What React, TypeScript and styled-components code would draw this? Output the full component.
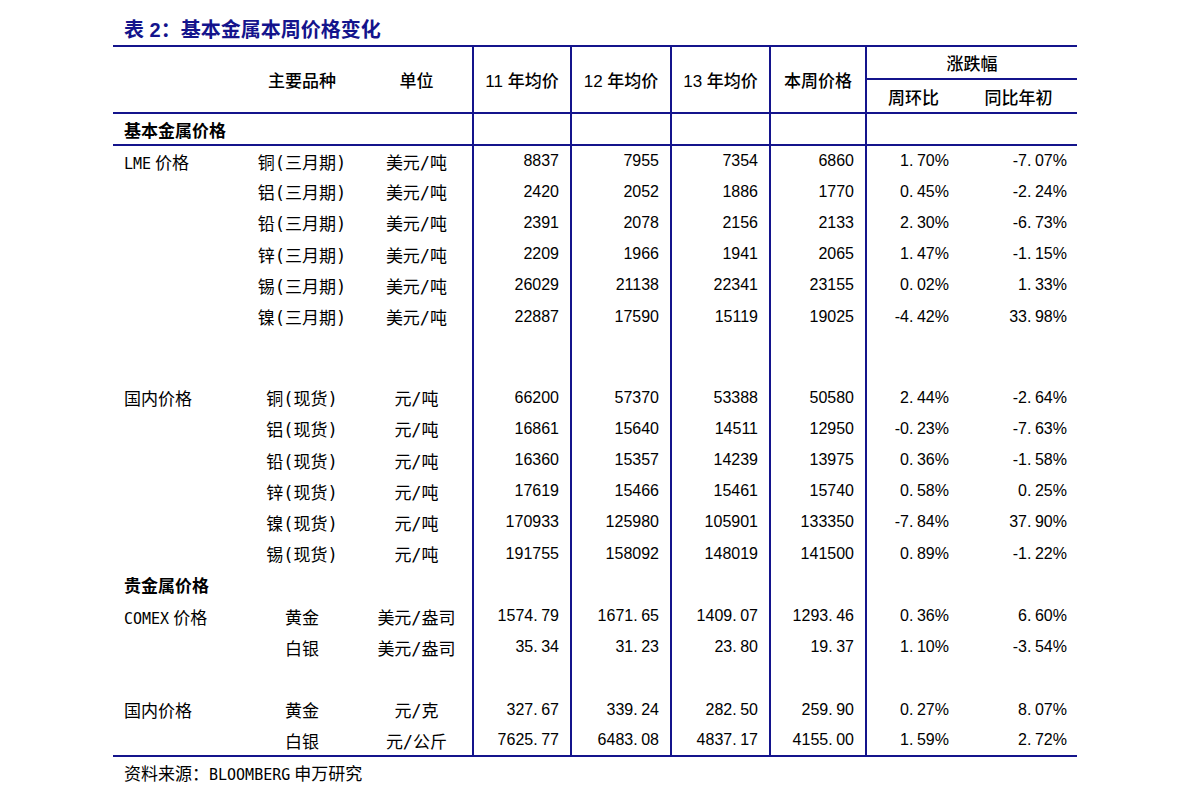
import React from "react"
import styled, {createGlobalStyle} from "styled-components"

const NAVY = "#14148c"

const GlobalStyle = createGlobalStyle`
    body {
        margin: 0;
        background: #fff;
    }
`

const Page = styled.div`
    padding: 16px 0 0 113px;
    width: 964px;
    color: #000;
`

const Title = styled.h2`
    margin: 0 0 0 11px;
    height: 29px;
    line-height: 29px;
    font-family: "Liberation Sans", "Noto Sans CJK SC", sans-serif;
    font-size: 20px;
    font-weight: 700;
    color: ${NAVY};
`

const Table = styled.table`
    width: 964px;
    border-collapse: collapse;
    table-layout: fixed;
    border-top: 2px solid ${NAVY};
    border-bottom: 2px solid ${NAVY};
`

const Head = styled.thead`
    border-bottom: 2px solid ${NAVY};
`

const HeadCell = styled.th<{ $divider?: boolean; $under?: boolean }>`
    padding: 0;
    font-family: "Liberation Sans", "Noto Sans CJK SC", sans-serif;
    font-size: 17px;
    font-weight: 500;
    text-align: center;
    vertical-align: middle;
    border-left: ${p => (p.$divider ? `2px solid ${NAVY}` : "none")};
    border-bottom: ${p => (p.$under ? `2px solid ${NAVY}` : "none")};
`

const HeadRow = styled.tr<{ $h: number }>`
    height: ${p => p.$h}px;
`

const BodyRow = styled.tr<{ $h?: number; $under?: boolean }>`
    height: ${p => p.$h ?? 31.2}px;
    border-bottom: ${p => (p.$under ? `2px solid ${NAVY}` : "none")};
`

const TextCell = styled.td<{ $align?: "left" | "center"; $bold?: boolean }>`
    padding: ${p => (p.$align === "left" ? "0 0 0 11px" : "0")};
    font-family: "DejaVu Sans Mono", "Noto Sans CJK SC", monospace;
    font-size: 17px;
    font-weight: ${p => (p.$bold ? 700 : 400)};
    text-align: ${p => p.$align ?? "center"};
    white-space: nowrap;
    vertical-align: middle;
`

const Latin = styled.span`
    font-size: 15px;
    margin-right: 4px;
`

const NumCell = styled.td<{ $divider?: boolean; $pad?: number }>`
    padding: 0 ${p => p.$pad ?? 11}px 0 0;
    font-family: "Liberation Sans", Arial, sans-serif;
    font-size: 16px;
    text-align: right;
    white-space: nowrap;
    vertical-align: middle;
    border-left: ${p => (p.$divider ? `2px solid ${NAVY}` : "none")};
`

const Dot = styled.span`
    display: inline-block;
    width: 0.5em;
    text-align: left;
`

const Source = styled.div`
    margin: 6px 0 0 11px;
    font-family: "DejaVu Sans Mono", "Noto Sans CJK SC", monospace;
    font-size: 17px;
    line-height: 22px;
`

interface Item {
    group?: string
    name: string
    unit: string
    values: string[]
    wk: string
    ytd: string
}

const lme: Item[] = [
    {group: "LME|价格", name: "铜(三月期)", unit: "美元/吨", values: ["8837", "7955", "7354", "6860"], wk: "1.70%", ytd: "-7.07%"},
    {name: "铝(三月期)", unit: "美元/吨", values: ["2420", "2052", "1886", "1770"], wk: "0.45%", ytd: "-2.24%"},
    {name: "铅(三月期)", unit: "美元/吨", values: ["2391", "2078", "2156", "2133"], wk: "2.30%", ytd: "-6.73%"},
    {name: "锌(三月期)", unit: "美元/吨", values: ["2209", "1966", "1941", "2065"], wk: "1.47%", ytd: "-1.15%"},
    {name: "锡(三月期)", unit: "美元/吨", values: ["26029", "21138", "22341", "23155"], wk: "0.02%", ytd: "1.33%"},
    {name: "镍(三月期)", unit: "美元/吨", values: ["22887", "17590", "15119", "19025"], wk: "-4.42%", ytd: "33.98%"},
]

const domestic: Item[] = [
    {group: "国内价格", name: "铜(现货)", unit: "元/吨", values: ["66200", "57370", "53388", "50580"], wk: "2.44%", ytd: "-2.64%"},
    {name: "铝(现货)", unit: "元/吨", values: ["16861", "15640", "14511", "12950"], wk: "-0.23%", ytd: "-7.63%"},
    {name: "铅(现货)", unit: "元/吨", values: ["16360", "15357", "14239", "13975"], wk: "0.36%", ytd: "-1.58%"},
    {name: "锌(现货)", unit: "元/吨", values: ["17619", "15466", "15461", "15740"], wk: "0.58%", ytd: "0.25%"},
    {name: "镍(现货)", unit: "元/吨", values: ["170933", "125980", "105901", "133350"], wk: "-7.84%", ytd: "37.90%"},
    {name: "锡(现货)", unit: "元/吨", values: ["191755", "158092", "148019", "141500"], wk: "0.89%", ytd: "-1.22%"},
]

const comex: Item[] = [
    {group: "COMEX|价格", name: "黄金", unit: "美元/盎司", values: ["1574.79", "1671.65", "1409.07", "1293.46"], wk: "0.36%", ytd: "6.60%"},
    {name: "白银", unit: "美元/盎司", values: ["35.34", "31.23", "23.80", "19.37"], wk: "1.10%", ytd: "-3.54%"},
]

const preciousDomestic: Item[] = [
    {group: "国内价格", name: "黄金", unit: "元/克", values: ["327.67", "339.24", "282.50", "259.90"], wk: "0.27%", ytd: "8.07%"},
    {name: "白银", unit: "元/公斤", values: ["7625.77", "6483.08", "4837.17", "4155.00"], wk: "1.59%", ytd: "2.72%"},
]

const Num: React.FC<{ v: string }> = ({v}) => {
    const i = v.indexOf(".")
    if (i < 0) return <>{v}</>
    return (
        <>
            {v.slice(0, i)}
            <Dot>.</Dot>
            {v.slice(i + 1)}
        </>
    )
}

// "LME|价格" -> latin part set narrower, like the half-width latin of the source font
const Group: React.FC<{ label?: string }> = ({label}) => {
    if (!label) return null
    const [latin, rest] = label.split("|")
    if (rest === undefined) return <>{label}</>
    return (
        <>
            <Latin>{latin}</Latin>
            {rest}
        </>
    )
}

const DataRow: React.FC<{ item: Item }> = ({item}) => (
    <BodyRow>
        <TextCell $align="left"><Group label={item.group} /></TextCell>
        <TextCell>{item.name}</TextCell>
        <TextCell>{item.unit}</TextCell>
        {item.values.map((v, i) => (
            <NumCell key={i} $divider>
                <Num v={v} />
            </NumCell>
        ))}
        <NumCell $divider>
            <Num v={item.wk} />
        </NumCell>
        <NumCell $pad={10}>
            <Num v={item.ytd} />
        </NumCell>
    </BodyRow>
)

const EmptyRow: React.FC<{ h?: number; label?: string; under?: boolean }> = ({h, label, under}) => (
    <BodyRow $h={h} $under={under}>
        <TextCell colSpan={3} $align="left" $bold>{label ?? ""}</TextCell>
        <NumCell $divider />
        <NumCell $divider />
        <NumCell $divider />
        <NumCell $divider />
        <NumCell $divider />
        <NumCell />
    </BodyRow>
)

const widths = [130, 118, 112, 98, 100, 99, 96, 94, 117]

const App: React.FC = () => (
    <>
        <GlobalStyle />
        <Page>
            <Title>表 2：基本金属本周价格变化</Title>
            <Table>
                <colgroup>
                    {widths.map((w, i) => <col key={i} style={{width: w}} />)}
                </colgroup>
                <Head>
                    <HeadRow $h={33}>
                        <HeadCell rowSpan={2} />
                        <HeadCell rowSpan={2}>主要品种</HeadCell>
                        <HeadCell rowSpan={2}>单位</HeadCell>
                        <HeadCell rowSpan={2} $divider>11 年均价</HeadCell>
                        <HeadCell rowSpan={2} $divider>12 年均价</HeadCell>
                        <HeadCell rowSpan={2} $divider>13 年均价</HeadCell>
                        <HeadCell rowSpan={2} $divider>本周价格</HeadCell>
                        <HeadCell colSpan={2} $divider $under>涨跌幅</HeadCell>
                    </HeadRow>
                    <HeadRow $h={34}>
                        <HeadCell $divider>周环比</HeadCell>
                        <HeadCell>同比年初</HeadCell>
                    </HeadRow>
                </Head>
                <tbody>
                    <EmptyRow h={32} label="基本金属价格" under />
                    {lme.map((it, i) => <DataRow key={`l${i}`} item={it} />)}
                    <EmptyRow h={50} />
                    {domestic.map((it, i) => <DataRow key={`d${i}`} item={it} />)}
                    <EmptyRow label="贵金属价格" />
                    {comex.map((it, i) => <DataRow key={`c${i}`} item={it} />)}
                    <EmptyRow />
                    {preciousDomestic.map((it, i) => <DataRow key={`p${i}`} item={it} />)}
                </tbody>
            </Table>
            <Source>资料来源：<Latin>BLOOMBERG</Latin>申万研究</Source>
        </Page>
    </>
)

export default App
